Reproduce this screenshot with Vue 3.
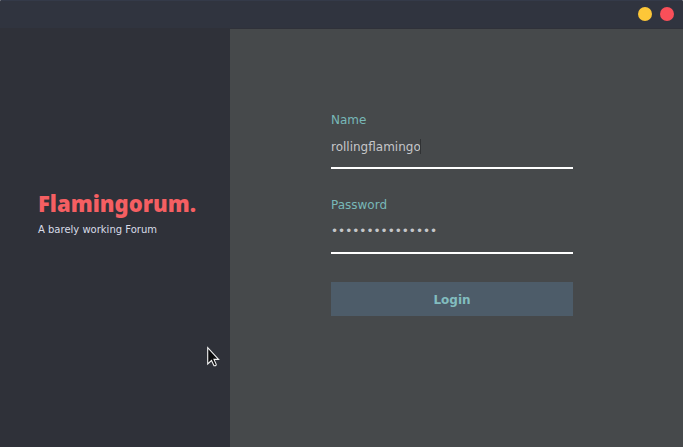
<script setup>
import { ref } from 'vue'

const name = ref('rollingflamingo')
const password = ref('flamingoflaming')
</script>

<template>
  <div class="window">
    <header class="titlebar">
      <button class="dot minimize" type="button" aria-label="Minimize"></button>
      <button class="dot close" type="button" aria-label="Close"></button>
    </header>
    <div class="body">
      <aside class="brand">
        <h1>Flamingorum.</h1>
        <p>A barely working Forum</p>
      </aside>
      <main class="panel">
        <form class="login" @submit.prevent>
          <div class="field">
            <label for="name">Name</label>
            <div class="entry">
              <input id="name" v-model="name" type="text" autocomplete="off" />
              <span class="caret"></span>
            </div>
          </div>
          <div class="field">
            <label for="password">Password</label>
            <div class="entry">
              <input id="password" v-model="password" type="password" autocomplete="off" />
            </div>
          </div>
          <button class="submit" type="submit">Login</button>
        </form>
      </main>
    </div>
    <svg class="pointer" viewBox="0 0 13 21" width="13" height="21" aria-hidden="true">
      <path d="M.7 1.7V17.9L4.5 14.5L7 19.7Q9.5 20.1 9.2 18.3L7 13.4H11.6Z" fill="#0c0c0e" stroke="#f2f2f2" stroke-width="1.1" />
    </svg>
  </div>
</template>

<style>
body {
  margin: 0;
  background: #fff;
}
</style>

<style scoped>
.window {
  position: relative;
  display: flex;
  flex-direction: column;
  min-height: 100vh;
  border-radius: 2px 2px 0 0;
  overflow: hidden;
  background: #2f3139;
  font-family: "DejaVu Sans", sans-serif;
  font-size: 12px;
}

.titlebar {
  display: flex;
  justify-content: flex-end;
  align-items: center;
  gap: 8px;
  height: 29px;
  padding: 0 9px 1px;
  box-sizing: border-box;
  border-top: 1px solid #343a49;
  border-bottom: 1px solid #2f3139;
  background: #30343f;
}

.dot {
  width: 14px;
  height: 14px;
  padding: 0;
  border: 0;
  border-radius: 50%;
}

.minimize {
  background: #fdc738;
}

.close {
  background: #f94f59;
}

.body {
  flex: 1;
  display: flex;
}

.brand {
  flex: 0 0 230px;
  box-sizing: border-box;
  padding: 156px 0 0 38px;
}

h1 {
  margin: 0;
  color: #f55f62;
  font-family: "Noto Sans", sans-serif;
  font-size: 22px;
  font-weight: 900;
  line-height: 36px;
}

.brand p {
  margin: 0;
  color: #d8dce8;
  font-size: 10px;
  line-height: 18px;
}

.panel {
  flex: 1;
  display: flex;
  justify-content: center;
  padding: 83px 9px 0 0;
  background: #46494b;
}

.login {
  width: 242px;
}

.field {
  margin-bottom: 28px;
}

label {
  display: block;
  color: #78b8b8;
  line-height: 16px;
}

.entry {
  position: relative;
  margin-top: 2px;
  border-bottom: 2px solid #fff;
}

input {
  display: block;
  width: 100%;
  height: 37px;
  box-sizing: border-box;
  padding: 0 0 4px;
  border: 0;
  outline: 0;
  background: transparent;
  color: #c5c6c9;
  font: inherit;
}

#password {
  padding-bottom: 6px;
}

.caret {
  position: absolute;
  left: 89px;
  top: 9px;
  width: 1px;
  height: 15px;
  background: #303234;
}

.submit {
  display: block;
  width: 100%;
  height: 34px;
  padding: 1px 0 0;
  border: 0;
  background: #4d5c69;
  color: #82bdbf;
  font: inherit;
  font-weight: bold;
}

.pointer {
  position: absolute;
  left: 207px;
  top: 346px;
}
</style>
